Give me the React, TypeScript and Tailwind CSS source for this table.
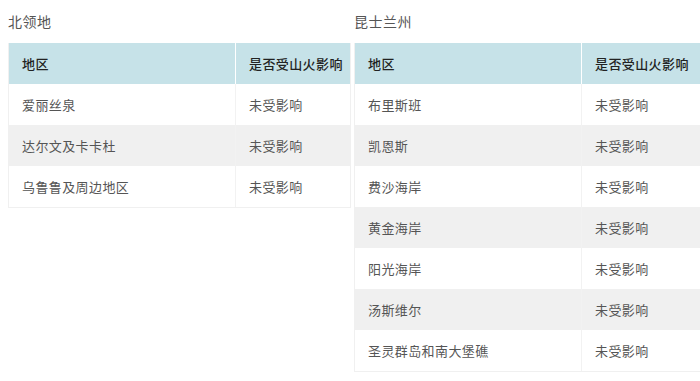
import React from "react";

const font = { fontFamily: '"Noto Sans CJK SC", "Noto Sans", sans-serif' };

function Table({ title, rows, width }: { title: string; rows: string[]; width: string }) {
  return (
    <div className={`flex flex-col shrink-0 ${width}`}>
      <div className="h-[43px] flex items-center text-[14px] tracking-[0.5px] text-[#555]">{title}</div>
      <div className="border border-[#f0f0f0] border-t-0">
        <div className="flex h-[41px] bg-[#c6e2e8] text-[13px] tracking-[0.4px] font-medium text-[#222]">
          <div className="w-[227px] shrink-0 px-[13px] flex items-center border-r border-white">地区</div>
          <div className="flex-1 px-[13px] flex items-center whitespace-nowrap">是否受山火影响</div>
        </div>
        {rows.map((r, i) => (
          <div
            key={r}
            className={`flex h-[41px] text-[13px] tracking-[0.4px] text-[#555] ${i % 2 === 1 ? "bg-[#f0f0f0]" : "bg-white"}`}
          >
            <div className="w-[227px] shrink-0 px-[13px] flex items-center border-r border-[#f2f2f2]">{r}</div>
            <div className="flex-1 px-[13px] flex items-center whitespace-nowrap">未受影响</div>
          </div>
        ))}
      </div>
    </div>
  );
}

export default function App() {
  return (
    <div className="w-[700px] h-[381px] overflow-hidden bg-white flex gap-[3px] pl-[8px]" style={font}>
      <Table title="北领地" rows={["爱丽丝泉", "达尔文及卡卡杜", "乌鲁鲁及周边地区"]} width="w-[343px]" />
      <Table
        title="昆士兰州"
        rows={["布里斯班", "凯恩斯", "费沙海岸", "黄金海岸", "阳光海岸", "汤斯维尔", "圣灵群岛和南大堡礁"]}
        width="w-[360px]"
      />
    </div>
  );
}
